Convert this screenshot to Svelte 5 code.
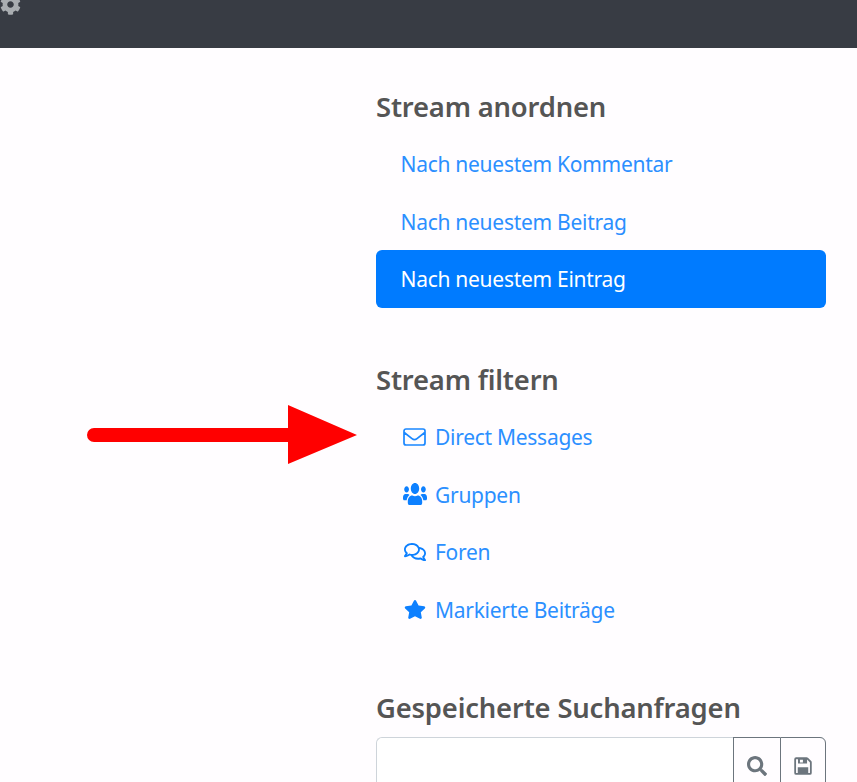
<script>
  const sorts = [
    { label: 'Nach neuestem Kommentar', active: false },
    { label: 'Nach neuestem Beitrag', active: false },
    { label: 'Nach neuestem Eintrag', active: true }
  ];
  const filters = [
    { label: 'Direct Messages', cls: 'env', vb: '0 0 23 18', d: 'M3 1h17a2 2 0 0 1 2 2v12a2 2 0 0 1-2 2H3a2 2 0 0 1-2-2V3a2 2 0 0 1 2-2zM1.2 4.5 9 10.6c1.5 1.2 3.500 1.200 5 0l7.800-6.100' },
    { label: 'Gruppen', cls: 'users', vb: '0 32 640 448', d: 'M96 224c35.3 0 64-28.7 64-64s-28.7-64-64-64-64 28.7-64 64 28.7 64 64 64zm448 0c35.3 0 64-28.7 64-64s-28.7-64-64-64-64 28.7-64 64 28.7 64 64 64zm32 32h-64c-17.6 0-33.5 7.1-45.1 18.6 40.3 22.1 68.9 62 75.1 109.4h66c17.7 0 32-14.3 32-32v-32c0-35.3-28.7-64-64-64zm-256 0c61.9 0 112-50.1 112-112S381.9 32 320 32 208 82.1 208 144s50.1 112 112 112zm76.8 32h-8.3c-20.8 10-43.9 16-68.5 16s-47.6-6-68.5-16h-8.3C179.6 288 128 339.6 128 403.2V432c0 26.5 21.5 48 48 48h288c26.5 0 48-21.5 48-48v-28.8c0-63.6-51.6-115.2-115.2-115.2zm-223.7-13.4C161.5 263.1 145.6 256 128 256H64c-35.3 0-64 28.7-64 64v32c0 17.7 14.3 32 32 32h65.9c6.3-47.4 34.9-87.3 75.2-109.4z' },
    { label: 'Foren', cls: 'talk', vb: '0 32 576 448', d: 'M532 386.2c27.5-27.1 44-61.1 44-98.2 0-80-76.5-146.1-176.2-157.9C368.3 72.5 294.3 32 208 32 93.1 32 0 103.6 0 192c0 37 16.5 71 44 98.2-15.3 30.7-37.3 54.5-37.7 54.9-6.3 6.7-8.1 16.5-4.4 25 3.6 8.5 12 14 21.2 14 53.5 0 96.7-20.2 125.2-38.8 9.2 2.1 18.7 3.7 28.4 4.9C208.1 407.6 281.8 448 368 448c20.8 0 40.8-2.4 59.8-6.8C456.3 459.7 499.4 480 553 480c9.2 0 17.5-5.5 21.2-14 3.6-8.5 1.9-18.3-4.4-25-.4-.3-22.5-24.1-37.8-54.8zm-392.8-92.3L122.1 305c-14.1 9.1-28.5 16.3-43.1 21.4 2.7-4.7 5.4-9.7 8-14.8l15.5-31.1L77.7 256C64.2 242.6 48 220.7 48 192c0-60.7 73.3-112 160-112s160 51.3 160 112-73.3 112-160 112c-16.5 0-33-1.9-49-5.6l-19.8-4.5zM498.3 352l-24.7 24.4 15.5 31.1c2.6 5.1 5.3 10.1 8 14.8-14.6-5.1-29-12.3-43.1-21.4l-17.1-11.1-19.9 4.6c-16 3.7-32.5 5.6-49 5.6-54 0-102.2-20.1-131.3-49.7C338 339.5 416 272.9 416 192c0-3.4-.4-6.7-.7-10C479.7 196.5 528 238.8 528 288c0 28.7-16.2 50.6-29.7 64z' },
    { label: 'Markierte Beiträge', cls: 'star', vb: '0 0 576 512', d: 'M259.3 17.8L194 150.2 47.9 171.5c-26.2 3.8-36.7 36.1-17.7 54.6l105.7 103-25 145.5c-4.5 26.3 23.2 46 46.4 33.7L288 439.6l130.7 68.7c23.2 12.2 50.9-7.4 46.4-33.7l-25-145.5 105.7-103c19-18.5 8.5-50.8-17.7-54.6L382 150.2 316.7 17.8c-11.7-23.6-45.6-23.9-57.4 0z' }
  ];
</script>

<div class="page">
  <header class="topbar">
    <svg class="cog" viewBox="0 0 512 512" aria-hidden="true"><path d="M487.4 315.7l-42.6-24.6c4.3-23.2 4.3-47 0-70.2l42.6-24.6c4.9-2.8 7.1-8.6 5.5-14-11.1-35.6-30-67.8-54.7-94.6-3.8-4.1-10-5.1-14.8-2.3L380.8 110c-17.9-15.4-38.5-27.3-60.8-35.1V25.8c0-5.6-3.9-10.5-9.4-11.7-36.7-8.2-74.3-7.8-109.2 0-5.5 1.2-9.4 6.1-9.4 11.7V75c-22.2 7.9-42.8 19.8-60.8 35.1L88.7 85.5c-4.9-2.8-11-1.9-14.8 2.3-24.7 26.7-43.6 58.9-54.7 94.6-1.7 5.4.6 11.2 5.5 14L67.3 221c-4.3 23.2-4.3 47 0 70.2l-42.6 24.6c-4.9 2.8-7.1 8.6-5.5 14 11.1 35.6 30 67.8 54.7 94.6 3.8 4.1 10 5.1 14.8 2.3l42.6-24.6c17.9 15.4 38.5 27.3 60.8 35.1v49.2c0 5.6 3.9 10.5 9.4 11.7 36.7 8.2 74.3 7.8 109.2 0 5.5-1.2 9.4-6.1 9.4-11.7v-49.2c22.2-7.9 42.8-19.8 60.8-35.1l42.6 24.6c4.9 2.8 11 1.9 14.8-2.3 24.7-26.7 43.6-58.9 54.7-94.6 1.5-5.5-.7-11.3-5.6-14.1zM256 336c-44.1 0-80-35.9-80-80s35.9-80 80-80 80 35.9 80 80-35.9 80-80 80z"/></svg>
  </header>

  <aside class="sidebar">
    <section class="block sort">
      <h4>Stream anordnen</h4>
      <ul>
        {#each sorts as s}
          <li class:active={s.active}><a href="#top">{s.label}</a></li>
        {/each}
      </ul>
    </section>

    <section class="block filter">
      <h4>Stream filtern</h4>
      <ul>
        {#each filters as f}
          <li>
            <a href="#top">
              <span class="ico {f.cls}"><svg viewBox={f.vb} preserveAspectRatio="none" aria-hidden="true"><path d={f.d}/></svg></span>
              {f.label}
            </a>
          </li>
        {/each}
      </ul>
    </section>

    <section class="block saved">
      <h4>Gespeicherte Suchanfragen</h4>
      <div class="search">
        <input type="text" aria-label="Suche" />
        <button type="button" aria-label="Suchen">
          <svg class="b-search" viewBox="0 0 512 512"><path d="M505 442.7L405.3 343c-4.5-4.5-10.6-7-17-7H372c27.6-35.3 44-79.7 44-128C416 93.1 322.9 0 208 0S0 93.1 0 208s93.1 208 208 208c48.3 0 92.7-16.4 128-44v16.3c0 6.4 2.5 12.5 7 17l99.7 99.7c9.4 9.4 24.6 9.4 33.9 0l28.3-28.3c9.4-9.4 9.4-24.6.1-34zM208 336c-70.7 0-128-57.2-128-128 0-70.7 57.2-128 128-128 70.7 0 128 57.2 128 128 0 70.7-57.2 128-128 128z"/></svg>
        </button>
        <button type="button" aria-label="Speichern">
          <svg class="b-save" viewBox="0 0 448 512"><path fill-rule="evenodd" d="M48 32h268a48 48 0 0 1 34 14l84 84a48 48 0 0 1 14 34v268a48 48 0 0 1-48 48H48a48 48 0 0 1-48-48V80a48 48 0 0 1 48-48zm-2 48v352h44V290h268v142h44V166l-74-74v100H96V80zm100 16v72h76V96z"/></svg>
        </button>
      </div>
    </section>
  </aside>

  <svg class="arrow" viewBox="0 0 300 90" aria-hidden="true">
    <path d="M24 38H218V15L287 45 218 74V52H24a7 7 0 0 1 0-14z"/>
  </svg>
</div>

<style>
  :global(body) {
    margin: 0;
    background: #fffdff;
    overflow: hidden;
  }
  .page {
    position: relative;
    height: 782px;
    overflow: hidden;
    font-family: "Noto Sans", "Open Sans", sans-serif;
  }
  .topbar {
    height: 48px;
    background: #383c44;
    overflow: hidden;
  }
  .cog {
    display: block;
    width: 21px;
    height: 21px;
    margin-top: -6px;
    fill: #a9adb1;
  }
  .sidebar {
    width: 449.5px;
    margin-left: 376px;
    padding-top: 40px;
  }
  .sort {
    margin-bottom: 53.5px;
  }
  .filter {
    margin-bottom: 51px;
  }
  h4 {
    margin: 0 0 9px;
    font-size: 27.4px;
    line-height: 38px;
    font-weight: 600;
    color: #555;
    letter-spacing: -0.18px;
  }
  ul {
    margin: 0;
    padding: 0;
    list-style: none;
  }
  li {
    height: 57.5px;
    border-radius: 6px;
    display: flex;
    align-items: center;
    padding-left: 24.5px;
  }
  a {
    display: flex;
    align-items: center;
    padding-top: 1px;
    color: #2b8fff;
    font-size: 21px;
    text-decoration: none;
    letter-spacing: -0.28px;
  }
  .active {
    background: #007bff;
  }
  .active a {
    color: #fff;
  }
  .ico {
    display: flex;
    justify-content: center;
    width: 25px;
    margin-left: 1.5px;
    margin-right: 8px;
  }
  .ico svg {
    display: block;
    width: 22px;
    height: 19px;
    fill: #0d80ff;
  }
  .ico.env svg {
    width: 23px;
    height: 18px;
    fill: none;
    stroke: #1a87ff;
    stroke-width: 1.7;
  }
  .ico.users svg {
    width: 24px;
    height: 22px;
    margin-top: -2px;
  }
  .ico.talk svg {
    height: 18px;
  }
  .saved h4 {
    margin-bottom: 10px;
  }
  .search {
    display: flex;
    height: 60px;
    border: 1.5px solid #ced4da;
    border-right: none;
    border-radius: 6px 6px 0 0;
    box-sizing: border-box;
  }
  .search input {
    flex: 1;
    min-width: 0;
    border: none;
    background: #fff;
    outline: none;
    border-radius: 6px 0 0 0;
  }
  .search button {
    width: 47px;
    height: 58px;
    padding: 0;
    margin: -1.5px 0 0;
    background: #fffdff;
    border: 1.5px solid #6c757d;
    border-right: none;
    display: flex;
    justify-content: center;
    align-items: center;
  }
  .search button:last-child {
    width: 46px;
    border-right: 1.5px solid #6c757d;
    border-radius: 0 6px 0 0;
  }
  .b-search {
    width: 20px;
    height: 20px;
    fill: #6c757d;
  }
  .b-save {
    width: 18px;
    height: 20px;
    fill: #6c757d;
  }
  .arrow {
    position: absolute;
    left: 70px;
    top: 390px;
    width: 300px;
    height: 90px;
    fill: #ff0000;
  }
</style>
